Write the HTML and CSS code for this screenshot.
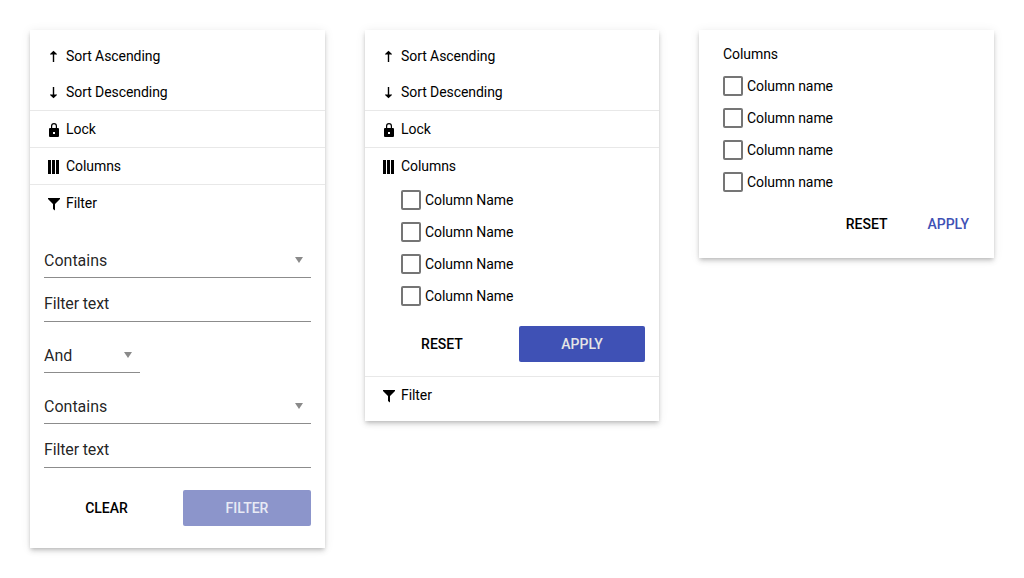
FILE: index.html
```html
<!DOCTYPE html>
<html lang="en">
<head>
<meta charset="utf-8">
<title>Column menu</title>
<link rel="stylesheet" href="styles.css">
</head>
<body>
<svg class="sprite" aria-hidden="true">
  <symbol id="up" viewBox="0 0 16 16"><path d="M7.500 2.800L11 6v.5H8.200V14H6.800V6.500H4V6z"/></symbol>
  <symbol id="down" viewBox="0 0 16 16"><path d="M7.500 14.200L11 11v-.5H8.200V3H6.800v7.500H4v.5z"/></symbol>
  <symbol id="lock" viewBox="0 0 16 16"><path fill-rule="evenodd" d="M5 7V5a3 3 0 0 1 6 0v2h1q1 0 1 1v7q0 1-1 1H4q-1 0-1-1V8q0-1 1-1zM6.200 7h3.600V5a1.800 1.800 0 0 0-3.600 0zM7 11v2h2v-2z"/></symbol>
  <symbol id="columns" viewBox="0 0 16 16"><path d="M2 2h3v14H2zM6 2h3v14H6zM10 2h3v14h-3z"/></symbol>
  <symbol id="filter" viewBox="0 0 16 16"><path d="M2 3h12v1L9 9v6.500L7 14V9L2 4z"/></symbol>
</svg>
<main class="board">
  <section class="card card-filter">
    <div class="group">
      <div class="item"><svg class="icon"><use href="#up"/></svg>Sort Ascending</div>
      <div class="item"><svg class="icon"><use href="#down"/></svg>Sort Descending</div>
    </div>
    <div class="group"><div class="item"><svg class="icon"><use href="#lock"/></svg>Lock</div></div>
    <div class="group"><div class="item"><svg class="icon"><use href="#columns"/></svg>Columns</div></div>
    <div class="group">
      <div class="item"><svg class="icon"><use href="#filter"/></svg>Filter</div>
      <div class="form">
        <div class="field">Contains<span class="caret"></span></div>
        <div class="field text">Filter text</div>
        <div class="field logic">And<span class="caret"></span></div>
        <div class="field">Contains<span class="caret"></span></div>
        <div class="field text">Filter text</div>
        <div class="actions">
          <button class="button">CLEAR</button>
          <button class="button primary disabled">FILTER</button>
        </div>
      </div>
    </div>
  </section>

  <section class="card card-columns">
    <div class="group">
      <div class="item"><svg class="icon"><use href="#up"/></svg>Sort Ascending</div>
      <div class="item"><svg class="icon"><use href="#down"/></svg>Sort Descending</div>
    </div>
    <div class="group"><div class="item"><svg class="icon"><use href="#lock"/></svg>Lock</div></div>
    <div class="group">
      <div class="item"><svg class="icon"><use href="#columns"/></svg>Columns</div>
      <div class="checks">
        <label class="check"><span class="box"></span>Column Name</label>
        <label class="check"><span class="box"></span>Column Name</label>
        <label class="check"><span class="box"></span>Column Name</label>
        <label class="check"><span class="box"></span>Column Name</label>
      </div>
      <div class="actions">
        <button class="button">RESET</button>
        <button class="button primary">APPLY</button>
      </div>
    </div>
    <div class="group"><div class="item"><svg class="icon"><use href="#filter"/></svg>Filter</div></div>
  </section>

  <section class="card card-chooser">
    <div class="title">Columns</div>
    <label class="check"><span class="box"></span>Column name</label>
    <label class="check"><span class="box"></span>Column name</label>
    <label class="check"><span class="box"></span>Column name</label>
    <label class="check"><span class="box"></span>Column name</label>
    <div class="links">
      <button class="button">RESET</button>
      <button class="button accent">APPLY</button>
    </div>
  </section>
</main>
</body>
</html>
```

FILE: styles.css
```css
* { box-sizing: border-box; }
body {
  margin: 0;
  background: #fff;
  color: #000;
  font: 14px/20px Roboto, sans-serif;
  letter-spacing: -0.07px;
}
.sprite { display: none; }
.board {
  display: grid;
  grid-template-columns: 295px 294px 295px;
  column-gap: 40px;
  align-items: start;
  padding: 30px;
}
.card {
  background: #fff;
  box-shadow: 0 2px 4px -1px rgba(0, 0, 0, .2), 0 4px 5px rgba(0, 0, 0, .08), 0 1px 10px rgba(0, 0, 0, .08);
}
.card-filter { height: 518px; padding-top: 8px; }
.card-columns { padding: 8px 0; }
.card-chooser { height: 228px; padding: 14px 24px 0; }
.group + .group { border-top: 1px solid #e8e8e8; }
.item {
  display: flex;
  align-items: center;
  gap: 4px;
  height: 36px;
  padding-left: 16px;
}
.icon { width: 16px; height: 16px; fill: #000; }
.form { padding: 23px 14px 0; }
.field {
  display: flex;
  align-items: center;
  justify-content: space-between;
  height: 34px;
  padding-right: 8px;
  border-bottom: 1px solid #8c8c8c;
  color: rgba(0, 0, 0, .87);
  font-size: 16px;
  letter-spacing: 0;
}
.text { height: 36px; margin-top: 8px; letter-spacing: -0.14px; }
.logic { width: 96px; margin: 17px 0; }
.caret {
  margin-bottom: 2px;
  border: 4px solid transparent;
  border-top: 6px solid #8a8a8a;
  border-bottom: 0;
}
.actions { display: grid; column-gap: 14px; }
.form .actions { grid-template-columns: 125px 128px; padding-top: 22px; }
.card-columns .actions {
  grid-template-columns: 126px 126px;
  padding: 14px 14px;
}
.button {
  height: 36px;
  padding: 0;
  border: 0;
  border-radius: 2px;
  background: transparent;
  color: #000;
  font: 500 14px/20px Roboto, sans-serif;
}
.primary { background: #3f51b5; color: #e5e5e5; }
.disabled { background: #8c95cb; color: #e8eaf5; }
.accent { color: #3f51b5; }
.checks { padding-left: 36px; }
.check {
  display: flex;
  align-items: center;
  gap: 4px;
  height: 32px;
}
.box {
  width: 20px;
  height: 20px;
  border: 2px solid #757575;
  border-radius: 2px;
}
.title { height: 20px; margin-bottom: 6px; }
.links {
  display: flex;
  justify-content: flex-end;
  gap: 40px;
  padding: 8px 1px 0 0;
}
```
